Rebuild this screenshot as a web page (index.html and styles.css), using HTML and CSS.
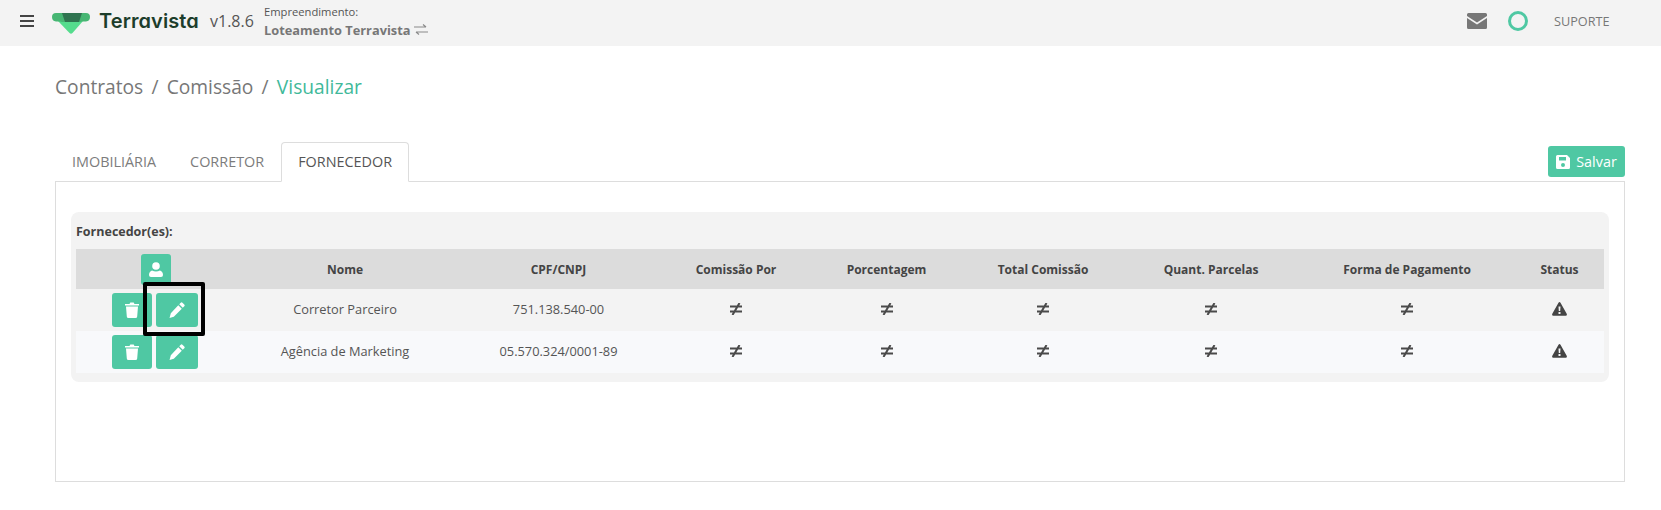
FILE: index.html
```html
<!DOCTYPE html>
<html lang="en">
<head>
  <meta charset="UTF-8">
  <meta name="viewport" content="width=device-width, initial-scale=1.0">
  <title>Terravista</title>
  <link rel="stylesheet" href="styles.css">
</head>
<body>
  <header class="topbar">
    <div class="topbar-left">
      <svg class="menu-icon" viewBox="0 0 14 12" width="14" height="12"><path d="M0 0h14v2H0zM0 5h14v2H0zM0 10h14v2H0z"/></svg>
      <svg class="logo" viewBox="0 0 38 21" width="38" height="21">
        <path d="M6 8h25L20.500 20q-1.500 1.500-3 0z" fill="#55dc8d"/>
        <path d="M4 0h30q4 0 4 4t-4 4.500H30L28 9H10L8 8.500H4q-4-.5-4-4.500T4 0z" fill="#47b673"/>
        <path d="M10 0h20l-3 9H13z" fill="#2f7450"/>
      </svg>
      <span class="brand">Terravista</span>
      <span class="version">v1.8.6</span>
      <div class="project">
        <span class="project-label">Empreendimento:</span>
        <span class="project-name">Loteamento Terravista
          <svg viewBox="0 0 14 11" width="14" height="11"><path d="M0 3h12M9 .5L12 3M14 8H2M5 10.500L2 8" fill="none" stroke="#8a8a8a" stroke-width="1.200"/></svg>
        </span>
      </div>
    </div>
    <div class="topbar-right">
      <svg class="mail-icon" viewBox="0 0 20 16" width="20" height="16"><path d="M1.500 0h17Q20 0 20 1.500V3l-10 6.500L0 3V1.500Q0 0 1.500 0zM0 5l10 6.500L20 5v9.500q0 1.500-1.500 1.500h-17Q0 16 0 14.500z"/></svg>
      <span class="status-ring"></span>
      <span class="support">SUPORTE</span>
    </div>
  </header>

  <main class="content">
    <nav class="breadcrumb">
      <span>Contratos</span><i>/</i><span>Comissão</span><i>/</i><span class="current">Visualizar</span>
    </nav>

    <div class="tabs-row">
      <ul class="tabs">
        <li class="tab">IMOBILIÁRIA</li>
        <li class="tab">CORRETOR</li>
        <li class="tab active">FORNECEDOR</li>
      </ul>
      <button class="btn btn-save">
        <svg viewBox="0 0 14 14" width="14" height="14"><path fill-rule="evenodd" d="M1.500 0H11l3 3v9.500q0 1.500-1.500 1.500h-11Q0 14 0 12.500v-11Q0 0 1.500 0zM3 2v3.500h7V2zM7 8a2 2 0 1 0 0 4a2 2 0 1 0 0-4z"/></svg>
        Salvar
      </button>
    </div>

    <section class="tab-panel">
      <div class="card">
        <h4 class="card-title">Fornecedor(es):</h4>
        <table class="grid">
          <colgroup>
            <col class="c-actions"><col class="c-name"><col class="c-doc"><col class="c-by"><col class="c-pct"><col class="c-total"><col class="c-qty"><col class="c-pay"><col class="c-status">
          </colgroup>
          <thead>
            <tr>
              <th><button class="btn btn-add"><svg viewBox="0 0 14 15" width="14" height="15"><circle cx="7" cy="4" r="3.800"/><path d="M3 8.500q4 2 8 0q3 1 3 4.500q0 2-2 2H2q-2 0-2-2q0-3.500 3-4.500z"/></svg></button></th>
              <th>Nome</th>
              <th>CPF/CNPJ</th>
              <th>Comissão Por</th>
              <th>Porcentagem</th>
              <th>Total Comissão</th>
              <th>Quant. Parcelas</th>
              <th>Forma de Pagamento</th>
              <th>Status</th>
            </tr>
          </thead>
          <tbody>
            <tr>
              <td class="actions">
                <button class="btn btn-del"><svg viewBox="0 0 14 16" width="14" height="16"><path d="M0 2h4.500l.8-1.500h3.400L9.500 2H14v1.500H0zM1 4.500h12l-.8 10q-.1 1.500-1.700 1.500h-7q-1.600 0-1.700-1.500z"/></svg></button>
                <button class="btn btn-edit"><svg viewBox="0 0 15 15" width="16" height="16"><path d="M11 .7q.8-.8 1.600 0l1.700 1.700q.8.8 0 1.600l-1.400 1.400-3.300-3.300zM8.700 3l3.300 3.300-7.500 7.500L.5 15l1.200-4.500z"/></svg></button>
              </td>
              <td>Corretor Parceiro</td>
              <td>751.138.540-00</td>
              <td><svg class="ne" viewBox="0 0 12 12" width="12" height="12"><path d="M0 3.500h12M0 8.500h12M9.500 0L2.500 12"/></svg></td>
              <td><svg class="ne" viewBox="0 0 12 12" width="12" height="12"><path d="M0 3.500h12M0 8.500h12M9.500 0L2.500 12"/></svg></td>
              <td><svg class="ne" viewBox="0 0 12 12" width="12" height="12"><path d="M0 3.500h12M0 8.500h12M9.500 0L2.500 12"/></svg></td>
              <td><svg class="ne" viewBox="0 0 12 12" width="12" height="12"><path d="M0 3.500h12M0 8.500h12M9.500 0L2.500 12"/></svg></td>
              <td><svg class="ne" viewBox="0 0 12 12" width="12" height="12"><path d="M0 3.500h12M0 8.500h12M9.500 0L2.500 12"/></svg></td>
              <td><svg class="warn" viewBox="0 0 15 14" width="15" height="14"><path fill-rule="evenodd" d="M6.500.8q1-1.400 2 0l6.200 11q.7 1.700-1 2H1.300q-1.700-.3-1-2zM6.500 4.500l.3 4.500h1.400l.3-4.500zM6.500 10v2h2v-2z"/></svg></td>
            </tr>
            <tr class="alt">
              <td class="actions">
                <button class="btn btn-del"><svg viewBox="0 0 14 16" width="14" height="16"><path d="M0 2h4.500l.8-1.500h3.400L9.500 2H14v1.500H0zM1 4.500h12l-.8 10q-.1 1.500-1.700 1.500h-7q-1.600 0-1.700-1.500z"/></svg></button>
                <button class="btn btn-edit"><svg viewBox="0 0 15 15" width="16" height="16"><path d="M11 .7q.8-.8 1.600 0l1.700 1.700q.8.8 0 1.600l-1.400 1.400-3.300-3.300zM8.700 3l3.300 3.300-7.500 7.500L.5 15l1.200-4.500z"/></svg></button>
              </td>
              <td>Agência de Marketing</td>
              <td>05.570.324/0001-89</td>
              <td><svg class="ne" viewBox="0 0 12 12" width="12" height="12"><path d="M0 3.500h12M0 8.500h12M9.500 0L2.500 12"/></svg></td>
              <td><svg class="ne" viewBox="0 0 12 12" width="12" height="12"><path d="M0 3.500h12M0 8.500h12M9.500 0L2.500 12"/></svg></td>
              <td><svg class="ne" viewBox="0 0 12 12" width="12" height="12"><path d="M0 3.500h12M0 8.500h12M9.500 0L2.500 12"/></svg></td>
              <td><svg class="ne" viewBox="0 0 12 12" width="12" height="12"><path d="M0 3.500h12M0 8.500h12M9.500 0L2.500 12"/></svg></td>
              <td><svg class="ne" viewBox="0 0 12 12" width="12" height="12"><path d="M0 3.500h12M0 8.500h12M9.500 0L2.500 12"/></svg></td>
              <td><svg class="warn" viewBox="0 0 15 14" width="15" height="14"><path fill-rule="evenodd" d="M6.500.8q1-1.400 2 0l6.200 11q.7 1.700-1 2H1.300q-1.700-.3-1-2zM6.500 4.500l.3 4.500h1.400l.3-4.500zM6.500 10v2h2v-2z"/></svg></td>
            </tr>
          </tbody>
        </table>
        <div class="highlight"></div>
      </div>
    </section>
  </main>
</body>
</html>
```

FILE: styles.css
```css
body {
  margin: 0;
  padding: 0;
  background: #ffffff;
  font-family: "Open Sans", "Liberation Sans", sans-serif;
  color: #555555;
  overflow: hidden;
}

/* top bar */
.topbar {
  box-sizing: border-box;
  display: flex;
  justify-content: space-between;
  align-items: center;
  height: 46px;
  padding-bottom: 4px;
  background: #f3f3f3;
}

.topbar-left {
  display: flex;
  align-items: center;
  padding-left: 20px;
}

.menu-icon {
  fill: #444444;
  margin-right: 18px;
}

.logo {
  margin-right: 9px;
  margin-top: 4px;
}

.brand {
  font-family: Inter, sans-serif;
  font-feature-settings: "cv11";
  font-size: 20px;
  font-weight: 600;
  letter-spacing: 0.1px;
  color: #1c3d2b;
  width: 111px;
}

.version {
  font-size: 16px;
  color: #555555;
  width: 54px;
}

.project {
  display: flex;
  flex-direction: column;
  gap: 3px;
}

.project-label {
  font-size: 11.200px;
  line-height: 15px;
  color: #555555;
}

.project-name {
  font-size: 12.800px;
  line-height: 17px;
  font-weight: 700;
  color: #777777;
}

.topbar-right {
  display: flex;
  align-items: center;
  padding-right: 107px;
  position: relative;
}

.mail-icon {
  fill: #777777;
  margin-right: 21px;
}

.status-ring {
  box-sizing: border-box;
  width: 20px;
  height: 20px;
  border: 3.500px solid #4fc8a3;
  border-radius: 50%;
  margin-right: 26px;
}

.support {
  font-size: 12.700px;
  color: #777777;
  position: absolute;
  left: 87px;
}

/* page content */
.content {
  padding: 0 36px 0 55px;
}

.breadcrumb {
  display: flex;
  align-items: center;
  height: 28px;
  margin: 26px 0 0;
  font-size: 19.200px;
  color: #777777;
}

.breadcrumb i {
  font-style: normal;
  margin: 0 8.200px;
}

.breadcrumb .current {
  color: #3fb99a;
}

.tabs-row {
  display: flex;
  justify-content: space-between;
  align-items: flex-end;
  margin-top: 42px;
}

.tabs {
  display: flex;
  list-style: none;
  margin: 0;
  padding: 0;
}

.tab {
  box-sizing: border-box;
  height: 40px;
  padding: 0 17px;
  margin-bottom: -1px;
  line-height: 38px;
  font-size: 14.400px;
  color: #7c7c7c;
  border: 1px solid transparent;
  border-width: 1px 0 0;
}

.tab.active {
  position: relative;
  padding: 0 16px;
  line-height: 38px;
  color: #555555;
  background: #ffffff;
  border: 1px solid #dddddd;
  border-bottom-color: #ffffff;
  border-radius: 4px 4px 0 0;
}

.btn {
  display: inline-flex;
  align-items: center;
  justify-content: center;
  padding: 0;
  border: none;
  border-radius: 3px;
  background: #4fc8a3;
  color: #ffffff;
  font-family: inherit;
  cursor: pointer;
}

.btn svg {
  fill: #ffffff;
}

.btn-save {
  gap: 6px;
  width: 77px;
  height: 31px;
  margin-bottom: 4px;
  font-size: 14.400px;
}

.tab-panel {
  box-sizing: border-box;
  height: 301px;
  border: 1px solid #dddddd;
  padding: 30px 15px 0;
}

.card {
  position: relative;
  box-sizing: border-box;
  height: 170px;
  padding: 0 5px;
  background: #f3f3f3;
  border-radius: 8px;
}

.card-title {
  margin: 0;
  height: 37px;
  line-height: 40px;
  font-size: 12.500px;
  font-weight: 700;
  color: #444444;
}

/* table */
.grid {
  width: 1528px;
  table-layout: fixed;
  border-collapse: collapse;
  font-size: 12.800px;
}

.c-actions { width: 159px; }
.c-name { width: 220px; }
.c-doc { width: 207px; }
.c-by { width: 148px; }
.c-pct { width: 153px; }
.c-total { width: 160px; }
.c-qty { width: 176px; }
.c-pay { width: 216px; }
.c-status { width: 89px; }

.grid th {
  height: 40px;
  padding: 0;
  background: #dcdcdc;
  font-size: 12px;
  font-weight: 700;
  color: #444444;
  text-align: center;
  vertical-align: middle;
}

.grid td {
  height: 42px;
  padding: 0 0 2px;
  box-sizing: border-box;
  text-align: center;
  vertical-align: middle;
  color: #555555;
}

.grid tr.alt td {
  background: #f8f9fb;
}

.btn-add {
  width: 30px;
  height: 31px;
  vertical-align: middle;
}

.grid td.actions {
  display: flex;
  justify-content: center;
  align-items: center;
  gap: 4px;
  padding: 0 1px 0 0;
}

.btn-del {
  width: 40px;
  height: 34px;
}

.btn-edit {
  width: 42px;
  height: 34px;
}

.ne {
  fill: none;
  stroke: #4a4a4a;
  stroke-width: 2;
  vertical-align: middle;
  margin-top: -4px;
}

.warn {
  fill: #444444;
  vertical-align: middle;
  margin-top: -4px;
}

/* black box drawn over the edit button */
.highlight {
  position: absolute;
  left: 72px;
  top: 70px;
  width: 54px;
  height: 46px;
  border: 4px solid #000000;
  border-radius: 2px;
}
```
